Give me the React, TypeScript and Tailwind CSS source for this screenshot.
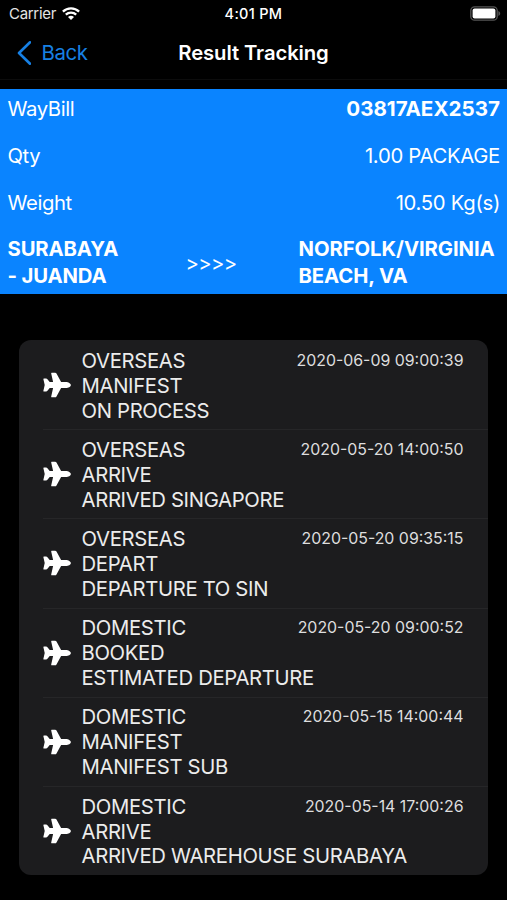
interface TrackingEvent {
    area: string;
    status: string;
    detail: string;
    date: string;
}

const events: TrackingEvent[] = [
    { area: "OVERSEAS", status: "MANIFEST", detail: "ON PROCESS", date: "2020-06-09 09:00:39" },
    { area: "OVERSEAS", status: "ARRIVE", detail: "ARRIVED SINGAPORE", date: "2020-05-20 14:00:50" },
    { area: "OVERSEAS", status: "DEPART", detail: "DEPARTURE TO SIN", date: "2020-05-20 09:35:15" },
    { area: "DOMESTIC", status: "BOOKED", detail: "ESTIMATED DEPARTURE", date: "2020-05-20 09:00:52" },
    { area: "DOMESTIC", status: "MANIFEST", detail: "MANIFEST SUB", date: "2020-05-15 14:00:44" },
    { area: "DOMESTIC", status: "ARRIVE", detail: "ARRIVED WAREHOUSE SURABAYA", date: "2020-05-14 17:00:26" },
];

function WifiIcon() {
    return (
        <svg viewBox="0 0 18 13" className="h-[13px] w-[18px]" fill="none" stroke="#fff" strokeWidth="2.3">
            <path d="M0.9 4.6a11.6 11.6 0 0 1 16.2 0" />
            <path d="M3.8 7.7a7.5 7.5 0 0 1 10.4 0" />
            <path d="M9 13 6 10.1a4.3 4.3 0 0 1 6 0Z" fill="#fff" stroke="none" />
        </svg>
    );
}

function BatteryIcon() {
    return (
        <svg viewBox="0 0 31 15" className="h-[15px] w-[31px]">
            <rect x="0.8" y="0.8" width="26.4" height="13.4" rx="3.8" fill="none" stroke="#555" strokeWidth="1.3" />
            <rect x="2.6" y="2.6" width="22.8" height="9.8" rx="2" fill="#fff" />
            <path d="M28.4 5v5c1.1-.4 1.8-1.3 1.8-2.5S29.5 5.4 28.4 5Z" fill="#555" />
        </svg>
    );
}

function PlaneIcon() {
    return (
        <svg viewBox="0 0 28 26" className="h-[26px] w-[28px] shrink-0" fill="#fff">
            <path d="M27.9 13c0 1.6-2.7 3.1-4.9 3.1h-4.9l-4.6 8.3c-.3.6-.8.9-1.4.9H9c-.6 0-.9-.4-.8-.9l1.9-8.3H6.7l-2.5 3c-.3.3-.6.5-1 .5H1.2c-.6 0-.9-.4-.8-.9L1.7 13 .4 7.3c-.1-.5.2-.9.8-.9h2c.4 0 .7.2 1 .5l2.5 3h3.4L8.2 1.6c-.1-.5.2-.9.8-.9h3.1c.6 0 1.1.3 1.4.9l4.6 8.300H23c2.200 0 4.900 1.500 4.900 3.100Z" />
        </svg>
    );
}

function StatusBar() {
    return (
        <div className="grid h-[27px] grid-cols-3 items-center pl-[9px] pr-[6px] text-[15px]">
            <div className="flex items-center gap-[6px] text-[#e4e4e4]">
                <span className="w-[47px] pt-px tracking-[-0.3px]">Carrier</span>
                <WifiIcon />
            </div>
            <span className="pr-[3px] text-center text-[14.5px] font-medium tracking-[0.3px]">4:01 PM</span>
            <div className="flex justify-end">
                <BatteryIcon />
            </div>
        </div>
    );
}

function NavBar() {
    return (
        <div className="grid h-[53px] grid-cols-[1fr_auto_1fr] items-center border-b border-[#0c0c0c] px-[17px]">
            <button className="flex items-center gap-[10.5px] text-[20.4px] tracking-[-0.4px] text-[#1780e4]">
                <svg viewBox="0 0 14 24" className="h-[24px] w-[14px]" fill="none" stroke="currentColor" strokeWidth="2.6">
                    <path d="M13 1.3 2 12l11 10.7" strokeLinecap="round" strokeLinejoin="round" />
                </svg>
                <span>Back</span>
            </button>
            <h1 className="text-[20.3px] font-semibold tracking-[-0.1px]">Result Tracking</h1>
        </div>
    );
}

function SummaryRow({ label, value, bold }: { label: string; value: string; bold?: boolean }) {
    return (
        <div className="flex h-[47px] items-start justify-between">
            <span className="tracking-[-0.4px]">{label}</span>
            <span className={bold ? "text-[20.6px] font-bold" : "tracking-[-0.3px]"}>{value}</span>
        </div>
    );
}

export default function App() {
    return (
        <div className="h-[900px] w-[507px] overflow-hidden bg-black font-['Inter',sans-serif] text-white">
            <StatusBar />
            <NavBar />

            <section className="mt-[9px] h-[205px] bg-[#0a84ff] pl-[7.5px] pr-[7px] pt-[6px] text-[20.3px] leading-[27px]">
                <SummaryRow label="WayBill" value="03817AEX2537" bold />
                <SummaryRow label="Qty" value="1.00 PACKAGE" />
                <SummaryRow label="Weight" value="10.50 Kg(s)" />
                <div className="-mt-px flex items-center">
                    <div className="w-[178px] font-bold tracking-[-0.15px]">
                        SURABAYA
                        <br />- JUANDA
                    </div>
                    <span className="w-[113px] tracking-[-0.7px]">&gt;&gt;&gt;&gt;</span>
                    <div className="whitespace-nowrap font-bold tracking-[-0.08px]">
                        NORFOLK/VIRGINIA
                        <br />
                        BEACH, VA
                    </div>
                </div>
            </section>

            <ul className="mx-[19px] mt-[46px] overflow-hidden rounded-[12px] bg-[#1c1c1e]">
                {events.map((event, i) => (
                    <li key={event.date} className="pl-[24px]">
                        <div className={`flex h-[89.2px] items-center border-t pr-[24.5px] ${i > 0 ? "border-[#262628]" : "border-transparent"}`}>
                            <PlaneIcon />
                            <div className="ml-[10.5px] flex-1 whitespace-nowrap pt-[2px] text-[20.3px] leading-[24.9px] tracking-[-0.33px] text-[#ececec]">
                                <div className="flex items-center justify-between">
                                    <span>{event.area}</span>
                                    <span className="text-[15.9px] tracking-normal text-[#dedede]">{event.date}</span>
                                </div>
                                <p>{event.status}</p>
                                <p>{event.detail}</p>
                            </div>
                        </div>
                    </li>
                ))}
            </ul>
        </div>
    );
}
